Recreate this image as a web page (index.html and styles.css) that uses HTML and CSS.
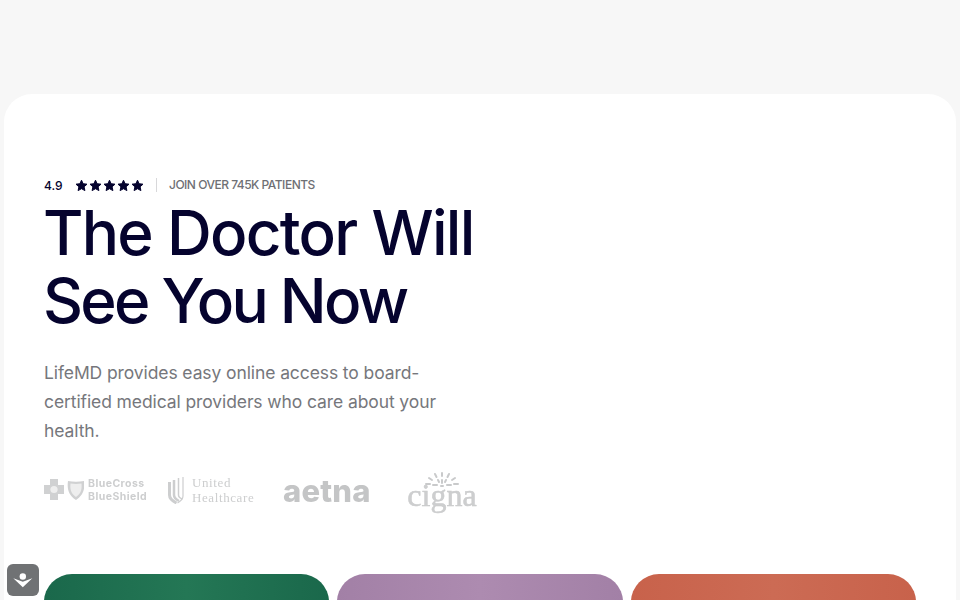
FILE: index.html
```html
<!DOCTYPE html>
<html>

<head>
    <title>LifeMD</title>
    <link rel="stylesheet" href="styles.css">
</head>

<body>
    <main class="hero">
        <div class="rating">
            <span class="rating-score">4.9</span>
            <svg class="rating-stars" width="69" height="13" viewBox="0 0 69 13" fill="#05032e" stroke="#05032e" stroke-width="1" stroke-linejoin="round">
                <polygon id="star" points="6.500,1.200 8.100,4.700 12,5.200 9.100,7.800 9.900,11.600 6.500,9.700 3.100,11.600 3.900,7.800 1,5.200 4.900,4.700" />
                <use href="#star" x="14" />
                <use href="#star" x="28" />
                <use href="#star" x="42" />
                <use href="#star" x="56" />
            </svg>
            <span class="rating-text">JOIN OVER 745K PATIENTS</span>
        </div>
        <h1>The Doctor Will<br><span class="title-second">See You Now</span></h1>
        <p class="intro">LifeMD provides easy online access to board-certified medical providers who care about your health.</p>
        <div class="logos">
            <div class="logo logo-bcbs">
                <svg width="40" height="22" viewBox="0 0 40 22" fill="#d0d1d2">
                    <path d="M6 0h8v6h6v9h-6v6H6v-6H0V6h6z" />
                    <circle cx="10" cy="10.500" r="3.600" fill="#eeeeee" />
                    <path d="M24 2c5 1 11 1 16 0 1 7 0 14-8 19-8-5-9-12-8-19z" />
                    <path d="M26.500 4.500c3 .5 8 .5 11 0 .5 5 0 10-5.500 13.500-5.500-3.500-6-8.500-5.500-13.500z" fill="#eeeeee" />
                </svg>
                <span class="logo-bcbs-name">BlueCross<br>BlueShield</span>
            </div>
            <div class="logo logo-uhc">
                <svg width="18" height="28" viewBox="0 0 18 28" fill="none" stroke="#cdcecf">
                    <path d="M1.500 6v13c0 4 3 6 7 8" stroke-width="3" />
                    <path d="M6 4v15c0 3 2 4.500 5 6" stroke-width="2.500" />
                    <path d="M10.500 2v17c0 2 1 3 4 4" stroke-width="1.500" />
                    <path d="M15 1v19c0 3-2 5-5.500 7" stroke-width="1.200" />
                </svg>
                <span class="logo-uhc-name">United<br>Healthcare</span>
            </div>
            <span class="logo logo-aetna">aetna</span>
            <div class="logo logo-cigna">
                <svg width="42" height="16" viewBox="0 0 42 16" stroke="#c9cacb" stroke-width="2" stroke-linecap="round">
                    <path d="M21 1v3M14 2l1.500 3M28 2l-1.500 3M8 6l3 2M34 6l-3 2M17 8l1 2M25 8l-1 2M21 8v3M5 12h4M33 12h4M12 13h4M26 13h4M20 14h2" />
                </svg>
                <span class="logo-cigna-name">cigna</span>
            </div>
        </div>
        <div class="cards">
            <div class="card card-green"></div>
            <div class="card card-purple"></div>
            <div class="card card-red"></div>
        </div>
    </main>

    <button class="access-button" type="button" aria-label="Accessibility">
        <svg width="20" height="20" viewBox="0 0 20 20" fill="#fff">
            <circle cx="9.800" cy="6.500" r="3.200" />
            <path d="M.3 8.300l9.500 3.400 9.500-3.400-9.500 9z" />
        </svg>
    </button>
</body>

</html>
```

FILE: styles.css
```css
html,
body {
    height: 100%;
    overflow: hidden;
}

body {
    font-family: Inter, "Open Sans", sans-serif;
    background-color: #f7f7f7;
    margin: 0;
    padding: 94px 4px 0;
    box-sizing: border-box;
}

.hero {
    background-color: #fff;
    border-radius: 28px 28px 0 0;
    padding: 83px 40px 0;
    height: 100%;
    box-sizing: border-box;
    overflow: hidden;
}

.rating {
    display: flex;
    align-items: center;
    height: 16px;
    font-size: 12px;
}

.rating-score {
    color: #05032e;
    font-weight: 500;
    width: 31px;
}

.rating-stars {
    margin-right: 12px;
}

.rating-text {
    color: #6e6f74;
    font-weight: 500;
    border-left: 1px solid #d8d8da;
    padding-left: 12px;
    letter-spacing: -0.5px;
    line-height: 14px;
}

h1 {
    color: #05032e;
    font-size: 62px;
    font-weight: 550;
    line-height: 68px;
    letter-spacing: -1.700px;
    margin: 6px 0 0 -1px;
}

.title-second {
    letter-spacing: -2.700px;
}

.intro {
    color: #76777c;
    font-size: 17.500px;
    line-height: 29px;
    letter-spacing: -0.1px;
    width: 420px;
    margin: 23px 0 0;
}

.logos {
    display: flex;
    align-items: center;
    height: 44px;
    margin-top: 23px;
    filter: blur(0.4px);
}

.logo {
    display: flex;
    align-items: center;
    color: #cdcecf;
}

.logo-bcbs {
    gap: 4px;
    width: 124px;
}

.logo-bcbs-name {
    font-size: 10.500px;
    font-weight: 700;
    line-height: 13px;
    letter-spacing: 0.45px;
}

.logo-uhc {
    gap: 6px;
    width: 115px;
}

.logo-uhc-name {
    font-family: "Liberation Serif", serif;
    font-size: 13px;
    line-height: 15px;
    letter-spacing: 0.6px;
}

.logo-aetna {
    font-size: 31px;
    font-weight: 800;
    letter-spacing: 0.2px;
    width: 123px;
    color: #c4c5c6;
}

.logo-cigna {
    flex-direction: column;
    width: 72px;
    padding-bottom: 3px;
}

.logo-cigna-name {
    font-family: "Liberation Serif", serif;
    font-size: 32px;
    line-height: 20px;
    margin-top: -3px;
    -webkit-text-stroke: 0.5px #c9cacb;
}

.cards {
    display: grid;
    grid-template-columns: repeat(3, 1fr);
    gap: 8px;
    margin-top: 62px;
}

.card {
    height: 120px;
    border-radius: 28px;
}

.card-green {
    background: linear-gradient(90deg, #1a684b, #247755 50%, #1a684b);
}

.card-purple {
    background: linear-gradient(90deg, #a280a6, #ad8bb0 50%, #a280a6);
}

.card-red {
    background: linear-gradient(90deg, #c8624b, #cc6b54 50%, #c8624b);
}

.access-button {
    position: fixed;
    left: 7px;
    bottom: 4px;
    width: 32px;
    height: 32px;
    padding: 0;
    border: 0;
    border-radius: 6px;
    background: #707274;
    display: flex;
    align-items: center;
    justify-content: center;
}
```
